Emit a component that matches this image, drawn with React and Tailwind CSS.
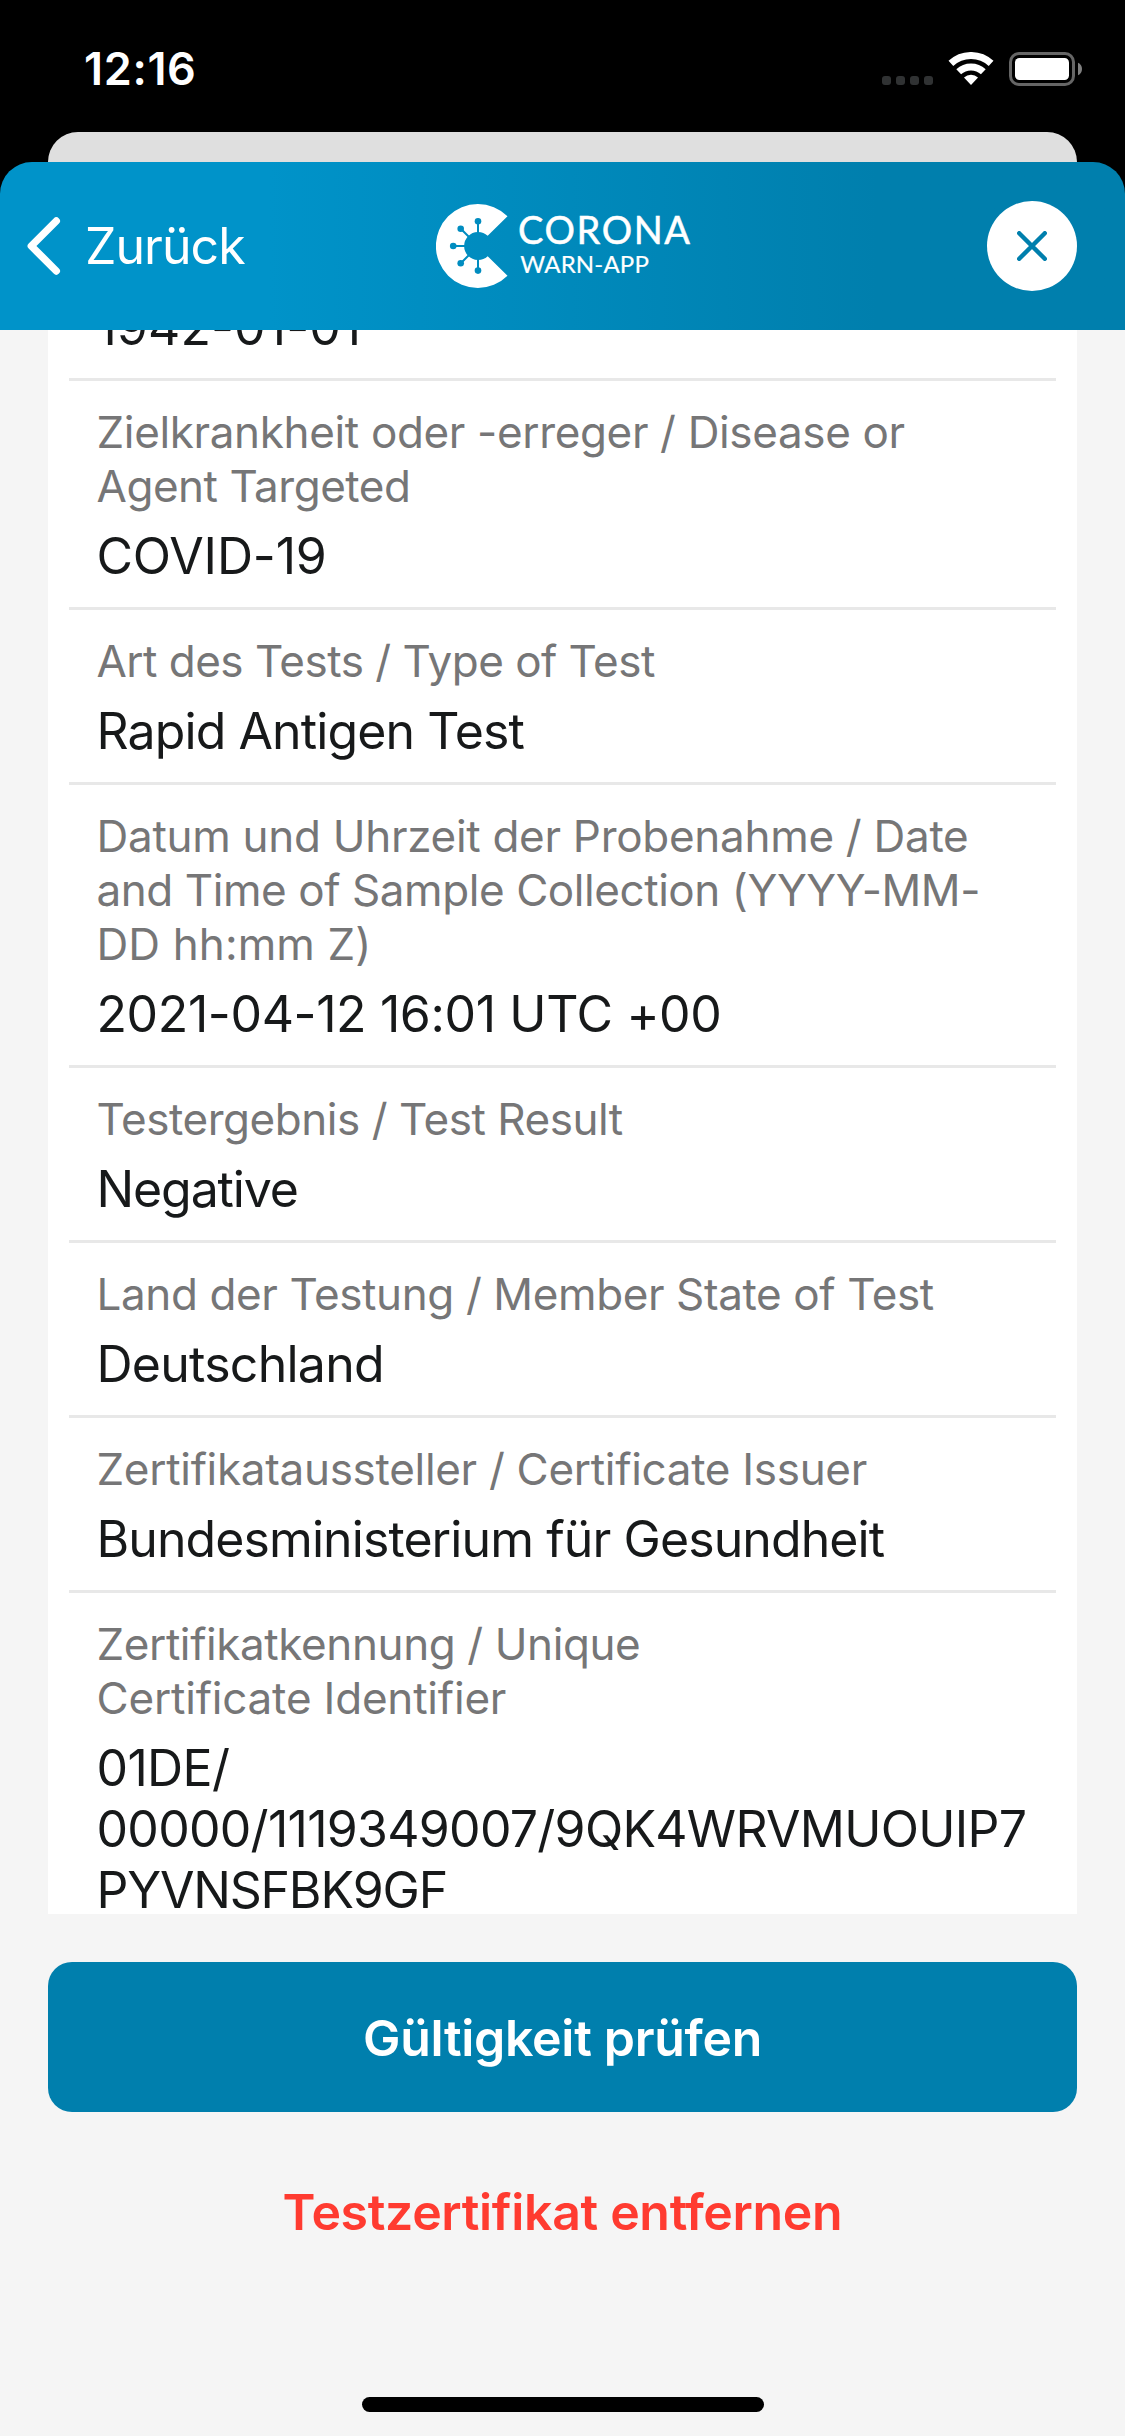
import React from "react";

const ROWS = [
  {
    labels: [["Zielkrankheit oder -erreger / Disease or", "tracking-[-0.35px]"], ["Agent Targeted", "tracking-[-0.48px]"]],
    values: [["COVID-19", "tracking-[-0.15px]"]],
  },
  {
    labels: [["Art des Tests / Type of Test", "tracking-[-0.52px]"]],
    values: [["Rapid Antigen Test", "tracking-[-0.9px]"]],
  },
  {
    labels: [
      ["Datum und Uhrzeit der Probenahme / Date", "tracking-[-0.29px]"],
      ["and Time of Sample Collection (YYYY-MM-", "tracking-[-0.43px]"],
      ["DD hh:mm Z)", "tracking-[0.1px]"],
    ],
    values: [["2021-04-12 16:01 UTC +00", "tracking-[-0.38px]"]],
  },
  {
    labels: [["Testergebnis / Test Result", "tracking-[-0.46px]"]],
    values: [["Negative", "tracking-[-1.12px]"]],
  },
  {
    labels: [["Land der Testung / Member State of Test", "tracking-[-0.39px]"]],
    values: [["Deutschland", "tracking-[-0.75px]"]],
  },
  {
    labels: [["Zertifikataussteller / Certificate Issuer", "tracking-[-0.3px]"]],
    values: [["Bundesministerium für Gesundheit", "tracking-[-0.91px]"]],
  },
  {
    labels: [["Zertifikatkennung / Unique", "tracking-[-0.4px]"], ["Certificate Identifier", "tracking-[-0.19px]"]],
    values: [
      ["01DE/", "tracking-[-0.66px]"],
      ["00000/1119349007/9QK4WRVMUOUIP7", "tracking-[-0.72px]"],
      ["PYVNSFBK9GF", "tracking-[-1.21px]"],
    ],
  },
];

function Line({ text, tracking }) {
  return <span className={`block whitespace-nowrap ${tracking}`}>{text}</span>;
}

function Row({ labels, values }) {
  return (
    <div className="mx-[21px] border-t-[3px] border-[#e8e8e8] pt-6 pr-4 pb-5 pl-[27.5px]">
      <dt className="text-[44px] leading-[54px] text-[#767677]">
        {labels.map(([text, tracking]) => (
          <Line key={text} text={text} tracking={tracking} />
        ))}
      </dt>
      <dd className="mt-[13px] text-[50px] leading-[61px] text-[#17191a]">
        {values.map(([text, tracking]) => (
          <Line key={text} text={text} tracking={tracking} />
        ))}
      </dd>
    </div>
  );
}

function StatusBar() {
  return (
    <div className="flex h-[132px] shrink-0 items-start justify-between bg-black pt-[42px] pr-[43px] pl-[84px]">
      <span className="text-[45px] leading-[54px] font-semibold tracking-[0.66px] text-white">12:16</span>
      <div className="flex pt-[10px]">
        <div className="mt-6 mr-[15px] flex gap-[5px]">
          <i className="size-[9px] rounded-[3px] bg-[#303233]" />
          <i className="size-[9px] rounded-[3px] bg-[#303233]" />
          <i className="size-[9px] rounded-[3px] bg-[#303233]" />
          <i className="size-[9px] rounded-[3px] bg-[#303233]" />
        </div>
        <svg width="46" height="34" viewBox="0 0 46 34" className="mr-[15px]" fill="none">
          <path d="M2.9 11.4A29.5 29.5 0 0 1 43.1 11.4" stroke="#fff" strokeWidth="7" />
          <path d="M10.7 19.8A18 18 0 0 1 35.3 19.8" stroke="#fff" strokeWidth="7" />
          <path d="M23 33L16 25.5A10.3 10.3 0 0 1 30 25.5Z" fill="#fff" />
        </svg>
        <svg width="73" height="34" viewBox="0 0 73 34" fill="none">
          <rect x="1.5" y="1.5" width="63" height="31" rx="8.5" stroke="#666" strokeWidth="3" />
          <rect x="6" y="6" width="54" height="22" rx="4.5" fill="#fff" />
          <path d="M69 10.7C71.6 11.8 73 14.2 73 17S71.6 22.2 69 23.3Z" fill="#808080" />
        </svg>
      </div>
    </div>
  );
}

function Logo() {
  return (
    <svg width="258" height="84" viewBox="436 204 258 84" className="block">
      <mask id="virus" maskUnits="userSpaceOnUse" x="430" y="200" width="90" height="92">
        <rect x="430" y="200" width="90" height="92" fill="#fff" />
        <g stroke="#000" strokeWidth="2">
          <path d="M478 246V221M478 246V271M478 246H453M478 246L460.8 228.8M478 246L460.8 263.2" />
        </g>
        <circle cx="478" cy="221.3" r="3.3" />
        <circle cx="478" cy="270.6" r="3.3" />
        <circle cx="453.2" cy="246" r="3.3" />
        <circle cx="460.7" cy="228.7" r="3.3" />
        <circle cx="460.7" cy="263.2" r="3.3" />
      </mask>
      <path
        d="M507.5 216.2A42 42 0 1 0 507.5 275.8L487.7 256.2A14 14 0 1 1 487.7 235.8Z"
        fill="#fff"
        mask="url(#virus)"
      />
      <g fill="#fff" stroke="#fff" fontFamily="Lato, sans-serif">
        <text x="518" y="244.2" fontSize="38" strokeWidth="0.5" textLength="172" lengthAdjust="spacing">CORONA</text>
        <text x="520.3" y="273" fontSize="24" strokeWidth="0.2" textLength="128.5" lengthAdjust="spacing">WARN-APP</text>
      </g>
    </svg>
  );
}

function Header() {
  return (
    <header className="grid h-[168px] shrink-0 grid-cols-[436px_1fr_auto] items-center rounded-t-[32px] bg-linear-to-r from-[#0093c9] from-24% to-[#007fad] to-78% pr-12">
      <button className="flex items-center">
        <svg width="34" height="58" viewBox="0 0 34 58" fill="none" className="ml-[27px]">
          <path d="M29.3 4L4.3 29L29.3 54" stroke="#fff" strokeWidth="7.4" strokeLinecap="round" strokeLinejoin="round" />
        </svg>
        <span className="ml-6 text-[50px] leading-[60px] tracking-[-0.95px] text-white">Zurück</span>
      </button>
      <Logo />
      <button className="grid size-[90px] place-items-center rounded-full bg-white">
        <svg width="30" height="30" viewBox="0 0 30 30" fill="none">
          <path d="M2.2 2.2L27.8 27.8M27.8 2.2L2.2 27.8" stroke="#007fad" strokeWidth="4.4" strokeLinecap="round" />
        </svg>
      </button>
    </header>
  );
}

export default function App() {
  return (
    <div className="h-[2436px] w-[1125px] overflow-hidden bg-black font-['Inter',sans-serif]">
      <StatusBar />
      <div className="mx-12 h-[30px] rounded-t-[30px] bg-[#dfdfdf]" />
      <Header />
      <div className="flex h-[2106px] flex-col items-center bg-[#f5f5f5]">
        <main className="h-[1584px] w-[1029px] shrink-0 overflow-hidden bg-white">
          <dl className="-mt-[33px] [font-feature-settings:'calt'_0]">
            <dd className="pb-5 pl-[48.5px] text-[50px] leading-[61px] tracking-[0.09px] text-[#17191a]">1942-01-01</dd>
            {ROWS.map((row) => (
              <Row key={row.labels[0][0]} {...row} />
            ))}
          </dl>
        </main>
        <button className="mt-12 h-[150px] w-[1029px] shrink-0 rounded-[24px] bg-[#007fad] pt-0.5 text-[50px] leading-[60px] font-semibold tracking-[-0.31px] text-white">
          Gültigkeit prüfen
        </button>
        <button className="mt-[70px] text-[50px] leading-[61px] font-semibold tracking-[-0.33px] text-[#ff3b30]">
          Testzertifikat entfernen
        </button>
        <div className="mt-auto mb-6 h-[15px] w-[402px] rounded-full bg-black" />
      </div>
    </div>
  );
}
